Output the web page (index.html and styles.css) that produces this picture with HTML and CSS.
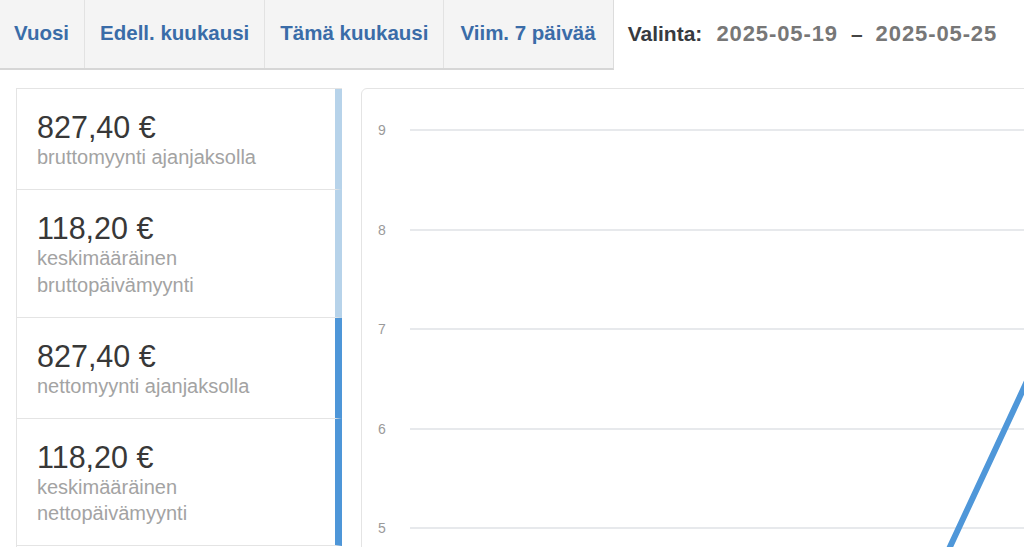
FILE: index.html
```html
<!DOCTYPE html>
<html lang="fi">
<head>
    <meta charset="UTF-8">
    <meta name="viewport" content="width=device-width, initial-scale=1.0">
    <title>Myynti</title>
    <link rel="stylesheet" href="styles.css">
</head>
<body>
    <header class="toolbar">
        <nav class="range-tabs">
            <a href="#" class="range-tab">Vuosi</a>
            <a href="#" class="range-tab">Edell. kuukausi</a>
            <a href="#" class="range-tab">Tämä kuukausi</a>
            <a href="#" class="range-tab">Viim. 7 päivää</a>
        </nav>
        <div class="selection">
            <span class="selection-label">Valinta:</span>
            <span class="selection-date">2025-05-19</span>
            <span class="selection-sep">–</span>
            <span class="selection-date">2025-05-25</span>
        </div>
    </header>

    <main class="dashboard">
        <ul class="stats">
            <li class="stat stat-gross">
                <div class="stat-value">827,40 €</div>
                <div class="stat-label">bruttomyynti ajanjaksolla</div>
            </li>
            <li class="stat stat-gross">
                <div class="stat-value">118,20 €</div>
                <div class="stat-label">keskimääräinen bruttopäivämyynti</div>
            </li>
            <li class="stat stat-net">
                <div class="stat-value">827,40 €</div>
                <div class="stat-label">nettomyynti ajanjaksolla</div>
            </li>
            <li class="stat stat-net">
                <div class="stat-value">118,20 €</div>
                <div class="stat-label">keskimääräinen nettopäivämyynti</div>
            </li>
        </ul>

        <section class="chart-card">
            <svg class="chart" width="700" height="500" viewBox="0 0 700 500">
                <g class="grid">
                    <line x1="48" y1="41" x2="700" y2="41"></line>
                    <line x1="48" y1="141" x2="700" y2="141"></line>
                    <line x1="48" y1="240" x2="700" y2="240"></line>
                    <line x1="48" y1="340" x2="700" y2="340"></line>
                    <line x1="48" y1="439" x2="700" y2="439"></line>
                </g>
                <g class="axis-labels">
                    <text x="16" y="46">9</text>
                    <text x="16" y="146">8</text>
                    <text x="16" y="245">7</text>
                    <text x="16" y="345">6</text>
                    <text x="16" y="444">5</text>
                </g>
                <path class="series" d="M 560 518 Q 625 378 700 217"></path>
            </svg>
        </section>
    </main>
</body>
</html>
```

FILE: styles.css
```css
html, body {
    margin: 0;
    padding: 0;
}

body {
    font-family: "Liberation Sans", Arial, sans-serif;
    background-color: #fff;
    color: #333;
    width: 1024px;
    height: 547px;
    overflow: hidden;
}

.toolbar {
    display: flex;
    align-items: stretch;
    height: 70px;
}

.range-tabs {
    display: flex;
    background-color: #f4f4f4;
    border-right: 1px solid #dcdcdc;
    border-bottom: 2px solid #d6d6d6;
}

.range-tab {
    display: flex;
    align-items: center;
    padding: 0 15px 2px;
    color: #3a6ca8;
    font-size: 20.5px;
    font-weight: bold;
    text-decoration: none;
    border-right: 1px solid #e2e2e2;
}

.range-tab:first-child {
    padding-left: 14px;
}

.range-tab:last-child {
    padding-left: 16px;
    padding-right: 17px;
    border-right: none;
}

.selection {
    display: flex;
    align-items: center;
    padding: 0 0 2px 14px;
    font-size: 21px;
    font-weight: bold;
}

.selection-label {
    color: #373a3f;
    margin-right: 14px;
}

.selection-date {
    color: #777;
    font-size: 22px;
    letter-spacing: 0.9px;
}

.selection-sep {
    color: #444;
    margin: 0 13px;
}

.dashboard {
    display: grid;
    grid-template-columns: 326px 700px;
    gap: 19px;
    padding: 18px 0 0 16px;
}

.stats {
    list-style: none;
    margin: 0;
    padding: 0;
    border-left: 1px solid #e4e4e4;
    border-top: 1px solid #e4e4e4;
}

.stat {
    padding: 21px 20px 18.5px;
    border-bottom: 1px solid #e4e4e4;
    border-right: 7px solid #b7d3ea;
}

.stat-net {
    border-right-color: #4e96d8;
}

.stat-value {
    font-size: 30.5px;
    line-height: 34px;
    color: #383838;
}

.stat-label {
    font-size: 20px;
    line-height: 26.5px;
    color: #a3a3a3;
    max-width: 260px;
}

.chart-card {
    border: 1px solid #e4e4e4;
    border-radius: 6px;
    height: 500px;
}

.chart {
    display: block;
}

.grid line {
    stroke: #dfe2e6;
    stroke-width: 1.5;
}

.axis-labels text {
    font-family: "Liberation Sans", Arial, sans-serif;
    font-size: 14px;
    fill: #9a9a9a;
}

.series {
    fill: none;
    stroke: #4f97d9;
    stroke-width: 6;
    stroke-linecap: round;
}
```
